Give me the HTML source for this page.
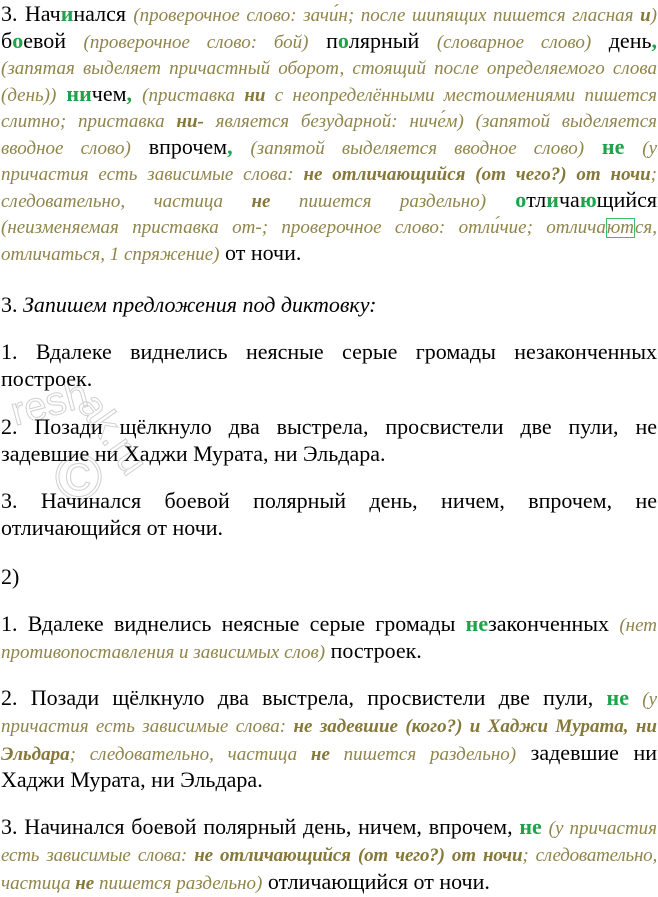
<!DOCTYPE html>
<html><head><meta charset="utf-8">
<style>
html,body{margin:0;padding:0;background:#fff;}
body{width:658px;height:894px;position:relative;overflow:hidden;font-family:"Liberation Serif","Noto Serif CJK SC",serif;font-size:22px;color:#000;}
.b{position:absolute;left:1px;width:656px;}
.l{height:26.5px;line-height:26.5px;white-space:nowrap;text-align:justify;text-align-last:justify;}
.b2 .l{height:27.4px;line-height:27.4px;}
.e{text-align-last:left;}
i{color:#8f844a;font-size:19px;}
i b{color:#857838;}
.g{color:#1ea34b;font-weight:bold;}
.box{display:inline-block;border:1px solid #3cbf6a;line-height:18px;}
.wm{position:absolute;font-family:"Liberation Sans",sans-serif;font-size:40px;color:transparent;-webkit-text-stroke:1px #d0d0d0;transform-origin:0 0;}
</style></head><body>
<div class="wm" style="left:6px;top:392px;transform:rotate(-15deg)">resh</div>
<div class="wm" style="left:105px;top:385px;transform:rotate(55deg)">ak.ru</div>
<div class="wm" style="left:55px;top:440px;font-size:64px;">©</div>

<div class="b" style="top:1px">
<div class="l">3. Нач<span class="g">и</span>нался <i>(проверочное слово: зачи́н; после шипящих пишется гласная <b>и</b>)</i></div>
<div class="l">б<span class="g">о</span>евой <i>(проверочное слово: бой)</i> п<span class="g">о</span>лярный <i>(словарное слово)</i> день<span class="g">,</span></div>
<div class="l"><i>(запятая выделяет причастный оборот, стоящий после определяемого слова</i></div>
<div class="l"><i>(день))</i> <span class="g">ни</span>чем<span class="g">,</span> <i>(приставка <b>ни</b> с неопределёнными местоимениями пишется</i></div>
<div class="l"><i>слитно; приставка <b>ни-</b> является безударной: ниче́м) (запятой выделяется</i></div>
<div class="l"><i>вводное слово)</i> впрочем<span class="g">,</span> <i>(запятой выделяется вводное слово)</i> <span class="g">не</span> <i>(у</i></div>
<div class="l"><i>причастия есть зависимые слова: <b>не отличающийся (от чего?) от ночи</b>;</i></div>
<div class="l"><i>следовательно, частица <b>не</b> пишется раздельно)</i> <span class="g">о</span>тл<span class="g">и</span>ча<span class="g">ю</span>щийся</div>
<div class="l"><i>(неизменяемая приставка от-; проверочное слово: отли́чие; отлича<span class="box">ют</span>ся,</i></div>
<div class="l e"><i>отличаться, 1 спряжение)</i> от ночи.</div>
</div>

<div class="b b2" style="top:291px"><div class="l e">3. <i style="color:#000;font-size:22px">Запишем предложения под диктовку:</i></div></div>

<div class="b b2" style="top:338px">
<div class="l">1. Вдалеке виднелись неясные серые громады незаконченных</div>
<div class="l e">построек.</div></div>
<div class="b b2" style="top:413px">
<div class="l">2. Позади щёлкнуло два выстрела, просвистели две пули, не</div>
<div class="l e">задевшие ни Хаджи Мурата, ни Эльдара.</div></div>
<div class="b b2" style="top:487px">
<div class="l">3. Начинался боевой полярный день, ничем, впрочем, не</div>
<div class="l e">отличающийся от ночи.</div></div>
<div class="b b2" style="top:563px"><div class="l e">2)</div></div>
<div class="b b2" style="top:610px">
<div class="l">1. Вдалеке виднелись неясные серые громады <span class="g">не</span>законченных <i>(нет</i></div>
<div class="l e"><i>противопоставления и зависимых слов)</i> построек.</div></div>
<div class="b b2" style="top:684px">
<div class="l">2. Позади щёлкнуло два выстрела, просвистели две пули, <span class="g">не</span> <i>(у</i></div>
<div class="l"><i>причастия есть зависимые слова: <b>не задевшие (кого?) и Хаджи Мурата, ни</b></i></div>
<div class="l"><i><b>Эльдара</b>; следовательно, частица <b>не</b> пишется раздельно)</i> задевшие ни</div>
<div class="l e">Хаджи Мурата, ни Эльдара.</div></div>
<div class="b b2" style="top:813px">
<div class="l">3. Начинался боевой полярный день, ничем, впрочем, <span class="g">не</span> <i>(у причастия</i></div>
<div class="l"><i style="letter-spacing:-0.2px">есть зависимые слова: <b>не отличающийся (от чего?) от ночи</b>; следовательно,</i></div>
<div class="l e"><i>частица <b>не</b> пишется раздельно)</i> отличающийся от ночи.</div></div>
</body></html>
